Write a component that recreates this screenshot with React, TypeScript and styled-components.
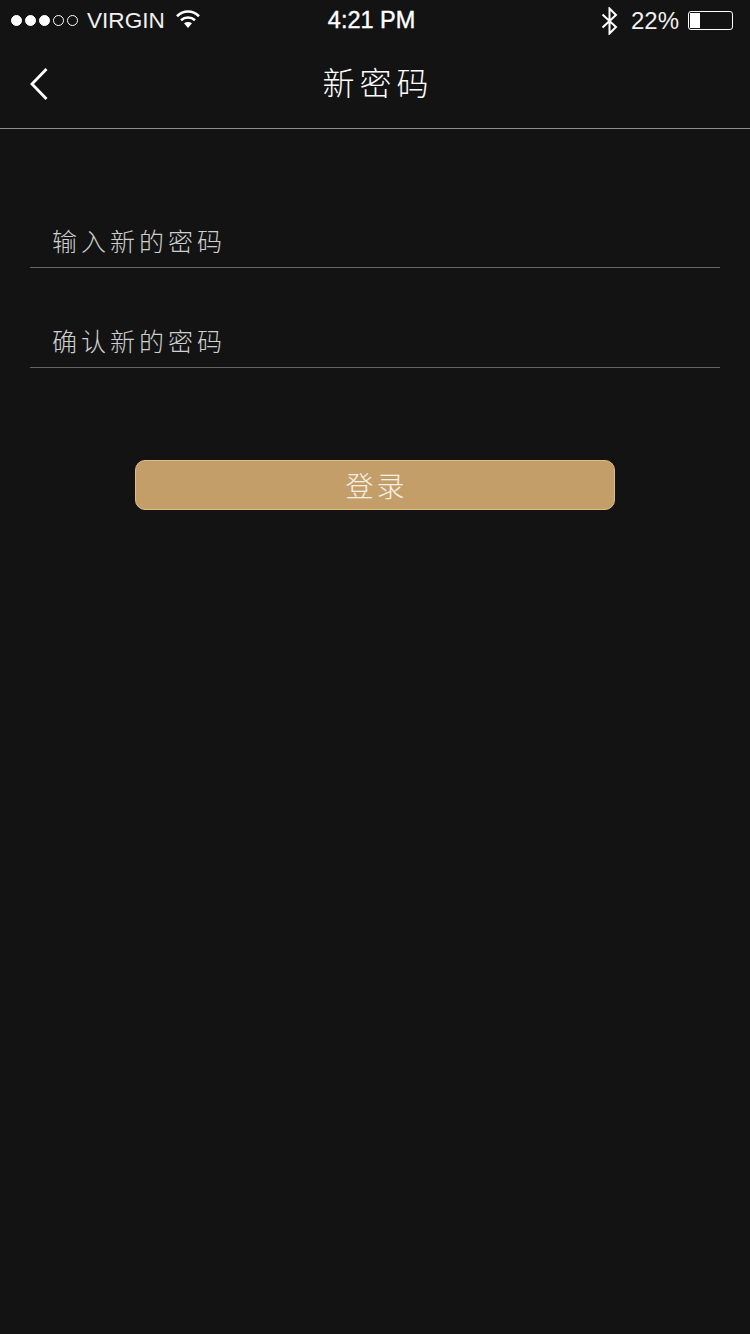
import React from "react";
import styled, { createGlobalStyle } from "styled-components";

const cjk = `"Noto Sans CJK SC", "Liberation Sans", sans-serif`;

const Global = createGlobalStyle`
  html, body { margin: 0; padding: 0; background: #131313; }
  * { box-sizing: border-box; }
`;

const Page = styled.div`
  width: 750px;
  min-height: 1334px;
  background: #131313;
  color: #fff;
  display: flex;
  flex-direction: column;
`;

const StatusBar = styled.div`
  height: 40px;
  display: flex;
  align-items: center;
  padding: 0 17px 0 11px;
  font-family: "Liberation Sans", Arial, sans-serif;
  font-size: 23px;
  color: #fff;
`;

const Signal = styled.div`
  display: flex;
  gap: 3px;
`;

const Dot = styled.span<{ $on: boolean }>`
  width: 11px;
  height: 11px;
  border-radius: 50%;
  border: 1px solid #fff;
  background: ${(p) => (p.$on ? "#fff" : "transparent")};
`;

const Carrier = styled.span`
  margin-left: 9px;
  font-size: 22.6px;
  line-height: 41px;
  color: #f0f0f0;
`;

const WifiIcon = styled.svg`
  margin-left: 11px;
  margin-top: -2px;
  display: block;
`;

const Time = styled.span`
  margin-left: 128px;
  font-size: 23.5px;
  font-weight: 400;
  -webkit-text-stroke: 0.4px #fff;
  line-height: 41px;
`;

const Spacer = styled.div`
  flex: 1;
`;

const BluetoothIcon = styled.svg`
  display: block;
  margin-top: 1px;
`;

const Percent = styled.span`
  margin-left: 13px;
  font-size: 24px;
  line-height: 41px;
  color: #f0f0f0;
`;

const Battery = styled.div`
  margin-left: 9px;
  width: 45px;
  height: 19px;
  border: 1.5px solid #fff;
  border-radius: 3px;
  padding: 1px;
  display: flex;
`;

const BatteryLevel = styled.div`
  background: #fff;
`;

const NavBar = styled.div`
  height: 89px;
  border-bottom: 1px solid #8e8e86;
  display: flex;
  align-items: center;
  justify-content: center;
  position: relative;
  padding-bottom: 7px;
`;

const BackIcon = styled.svg`
  position: absolute;
  left: 30px;
  top: 27px;
  display: block;
`;

const Title = styled.h1`
  margin: 0;
  font-family: ${cjk};
  font-size: 32px;
  font-weight: 300;
  line-height: 44px;
  letter-spacing: 5px;
  padding-left: 6px;
  color: #fff;
`;

const Form = styled.div`
  display: flex;
  flex-direction: column;
  padding: 0 30px;
  margin-top: 71px;
`;

const Field = styled.div`
  height: 68px;
  margin-bottom: 32px;
  padding: 21px 0 0 22px;
  border-bottom: 1px solid #6a6458;
  font-family: ${cjk};
  font-size: 25px;
  font-weight: 300;
  line-height: 38px;
  letter-spacing: 4px;
  color: #cfcfcf;
`;

const SubmitRow = styled.div`
  display: flex;
  justify-content: center;
  margin-top: 60px;
`;

const Submit = styled.button`
  width: 480px;
  height: 50px;
  background: #c49e69;
  border: 1px solid #e0bd85;
  border-radius: 10px;
  padding: 0 0 0 3px;
  font-family: ${cjk};
  font-size: 28px;
  font-weight: 300;
  line-height: 46px;
  letter-spacing: 3px;
  color: #f6f0e4;
`;

export default function App() {
  return (
    <Page>
      <Global />
      <StatusBar>
        <Signal>
          {[1, 1, 1, 0, 0].map((on, i) => (
            <Dot key={i} $on={!!on} />
          ))}
        </Signal>
        <Carrier>VIRGIN</Carrier>
        <WifiIcon width="24" height="18" viewBox="0 0 24 18" fill="none" stroke="#fff" strokeWidth="2.6">
          <path d="M1 6.2C7.5 0 16.5 0 23 6.2" />
          <path d="M5 10.2c4-3.7 10-3.7 14 0" />
          <path d="M12 18 8 13.2c2.400-1.700 5.600-1.700 8 0z" fill="#fff" stroke="none" />
        </WifiIcon>
        <Time>4:21 PM</Time>
        <Spacer />
        <BluetoothIcon width="17" height="28" viewBox="0 0 17 28" fill="none" stroke="#fff" strokeWidth="2">
          <path d="M1.500 7.500 15 20 8.500 26.500V1.500L15 8 1.500 20.500" />
        </BluetoothIcon>
        <Percent>22%</Percent>
        <Battery>
          <BatteryLevel style={{ width: `${22 * 0.45}px` }} />
        </Battery>
      </StatusBar>
      <NavBar>
        <BackIcon width="18" height="34" viewBox="0 0 18 34" fill="none" stroke="#fff" strokeWidth="2.800">
          <path d="M16.500 2 2 17 16.500 32" />
        </BackIcon>
        <Title>新密码</Title>
      </NavBar>
      <Form>
        <Field>输入新的密码</Field>
        <Field>确认新的密码</Field>
        <SubmitRow>
          <Submit>登录</Submit>
        </SubmitRow>
      </Form>
    </Page>
  );
}
